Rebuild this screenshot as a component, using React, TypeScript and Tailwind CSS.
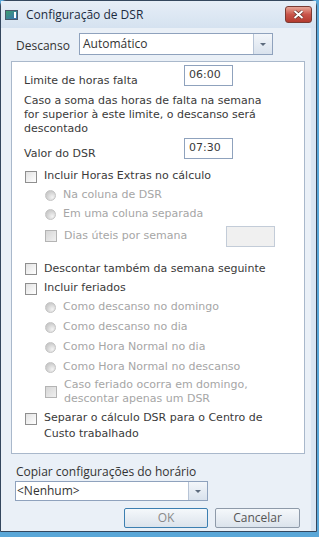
import React from "react";

function Check({ disabled }: { disabled?: boolean }) {
    return (
        <span
            className={
                disabled
                    ? "inline-block h-[12px] w-[12px] shrink-0 border border-[#b4b4b4] bg-gradient-to-br from-[#d6d6d6] to-[#f0f0f0]"
                    : "inline-block h-[12px] w-[12px] shrink-0 border border-[#8f8f8f] bg-gradient-to-br from-[#e2e2e2] to-white"
            }
        />
    );
}

function Radio() {
    return (
        <span className="inline-block h-[11px] w-[11px] shrink-0 rounded-full border border-[#c4c4c4] bg-[radial-gradient(circle_at_70%_70%,#f4f4f4_0%,#d0d0d0_60%,#bdbdbd_100%)]" />
    );
}

function Row({ children, h = "h-[19px]", indent }: { children: React.ReactNode; h?: string; indent?: boolean }) {
    return (
        <div className={`flex items-center gap-[7px] ${h} ${indent ? "pl-[21px]" : "pl-[1px]"}`}>
            {children}
        </div>
    );
}

function DropArrow() {
    return (
        <div className="flex h-full w-[19px] items-center justify-center border-l border-[#b7c4d6] bg-gradient-to-b from-[#f3f6fa] to-[#d9e2ed]">
            <span className="h-0 w-0 border-x-[3px] border-t-[3px] border-x-transparent border-t-[#5d6b7d]" />
        </div>
    );
}

export default function App() {
    return (
        <div className="flex h-[537px] w-[319px] flex-col bg-[#5aa7d8] font-['Open_Sans',sans-serif] text-[#1e1e1e]">
            <div className="flex h-[532px] w-[317px] flex-col rounded-t-[6px] border border-[#34475e] bg-[#d9e5f2]">
                {/* title bar */}
                <div className="flex h-[27px] shrink-0 items-center bg-gradient-to-b from-[#e6eef7] to-[#d5e2f0] pl-[4px] pr-[4px]">
                    <span className="relative mt-[1px] h-[10px] w-[13px] border border-[#4a5a6c] bg-gradient-to-br from-[#3f9d6e] to-[#3d6fb2]">
                        <span className="absolute right-[1px] top-[1px] h-[6px] w-[2px] bg-white" />
                    </span>
                    <span className="ml-[8px] text-[12px] text-[#1b2b40]">Configuração de DSR</span>
                    <span className="ml-auto flex h-[17px] w-[27px] items-center justify-center rounded-[3px] border border-[#7a3b33] bg-gradient-to-b from-[#e7a597] via-[#c9544a] to-[#b33a2e]">
                        <svg width="11" height="9" viewBox="0 0 11 9">
                            <path d="M1.5 1 L9.5 8 M9.5 1 L1.5 8" stroke="#5a2a24" strokeWidth="3.2" />
                            <path d="M1.5 1 L9.5 8 M9.5 1 L1.5 8" stroke="#ffffff" strokeWidth="2" />
                        </svg>
                    </span>
                </div>

                {/* client */}
                <div className="mr-[5px] flex flex-1 flex-col bg-[#eaf0f7] pl-[10px] pr-[6px]">
                    <div className="mt-[5px] flex h-[22px] items-center">
                        <span className="mt-[3px] w-[68px] pl-[5px] text-[12px] text-[#333]">Descanso</span>
                        <div className="flex h-[22px] w-[194px] items-stretch border border-[#8fa2bd] bg-white">
                            <span className="flex-1 pl-[3px] pt-[1px] text-[12px] leading-[18px] text-[#333]">Automático</span>
                            <DropArrow />
                        </div>
                    </div>

                    {/* group panel */}
                    <div className="mt-[6px] flex h-[393px] w-[294px] flex-col border border-[#a9b8cb] bg-white pl-[12px] font-['DejaVu_Sans',sans-serif] text-[11px] text-[#3a3a3a]">
                        <div className="mt-[3px] flex items-start">
                            <span className="mt-[9px] w-[160px] leading-[14px]">Limite de horas falta</span>
                            <span className="flex h-[21px] w-[49px] items-start border border-[#8fa2bd] pl-[4px] leading-[18px]">06:00</span>
                        </div>
                        <p className="mt-[6px] leading-[14px]">
                            Caso a soma das horas de falta na semana
                            <br />
                            for superior à este limite, o descanso será
                            <br />
                            descontado
                        </p>
                        <div className="mt-[2px] flex items-start">
                            <span className="mt-[9px] w-[160px] leading-[14px]">Valor do DSR</span>
                            <span className="flex h-[21px] w-[49px] items-start border border-[#8fa2bd] pl-[4px] leading-[18px]">07:30</span>
                        </div>

                        <div className="mt-[6px]">
                            <Row>
                                <Check />
                                <span>Incluir Horas Extras no cálculo</span>
                            </Row>
                            <Row indent>
                                <Radio />
                                <span className="text-[#a6a6a6]">Na coluna de DSR</span>
                            </Row>
                            <Row indent>
                                <Radio />
                                <span className="text-[#a6a6a6]">Em uma coluna separada</span>
                            </Row>
                            <Row indent h="h-[22px] mt-[1px]">
                                <Check disabled />
                                <span className="w-[155px] text-[#a6a6a6]">Dias úteis por semana</span>
                                <span className="h-[21px] w-[49px] border border-[#c3ccd8] bg-[#f0f0f0]" />
                            </Row>
                            <Row h="h-[20px] mt-[12px]">
                                <Check />
                                <span>Descontar também da semana seguinte</span>
                            </Row>
                            <Row>
                                <Check />
                                <span>Incluir feriados</span>
                            </Row>
                            <Row indent>
                                <Radio />
                                <span className="text-[#a6a6a6]">Como descanso no domingo</span>
                            </Row>
                            <Row indent h="h-[20px]">
                                <Radio />
                                <span className="text-[#a6a6a6]">Como descanso no dia</span>
                            </Row>
                            <Row indent h="h-[20px]">
                                <Radio />
                                <span className="text-[#a6a6a6]">Como Hora Normal no dia</span>
                            </Row>
                            <Row indent h="h-[20px]">
                                <Radio />
                                <span className="text-[#a6a6a6]">Como Hora Normal no descanso</span>
                            </Row>
                            <div className="mt-[1px] flex items-center gap-[7px] pl-[21px]">
                                <Check disabled />
                                <span className="leading-[14px] text-[#a6a6a6]">
                                    Caso feriado ocorra em domingo,
                                    <br />
                                    descontar apenas um DSR
                                </span>
                            </div>
                            <div className="mt-[4px] flex items-start gap-[7px] pl-[1px]">
                                <span className="mt-[3px]">
                                    <Check />
                                </span>
                                <span className="leading-[16px]">
                                    Separar o cálculo DSR para o Centro de
                                    <br />
                                    Custo trabalhado
                                </span>
                            </div>
                        </div>
                    </div>

                    <span className="mt-[10px] pl-[5px] text-[12px] leading-[16px] text-[#333]">Copiar configurações do horário</span>
                    <div className="ml-[4px] mt-[1px] flex h-[20px] w-[193px] items-stretch border border-[#8fa2bd] bg-white">
                        <span className="flex-1 pl-[1px] text-[12px] leading-[18px] text-[#333]">&lt;Nenhum&gt;</span>
                        <DropArrow />
                    </div>
                    <div className="mt-[7px] flex gap-[7px] pl-[113px]">
                        <button className="h-[20px] w-[84px] rounded-[2px] border border-[#3c7fb1] bg-gradient-to-b from-[#f5f8fb] to-[#dbe3ec] text-[12px] leading-[16px] text-[#8a8a8a]">
                            OK
                        </button>
                        <button className="h-[20px] w-[85px] rounded-[2px] border border-[#8e9aa9] bg-gradient-to-b from-[#f5f8fb] to-[#dbe3ec] text-[12px] leading-[16px] text-[#555]">
                            Cancelar
                        </button>
                    </div>
                </div>
            </div>
        </div>
    );
}
